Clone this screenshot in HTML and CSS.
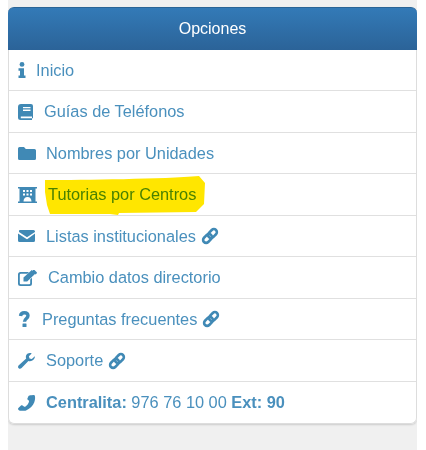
FILE: index.html
```html
<!DOCTYPE html>
<html>
<head>
  <meta charset="UTF-8" />
  <title>Opciones</title>
  <link rel="stylesheet" href="styles.css">
</head>
<body>
  <div class="column">
    <div class="panel">
      <div class="panel-heading">Opciones</div>
      <ul class="menu">
        <li class="menu-item">
          <svg class="icon" width="8" height="16" viewBox="0 0 8 16"><circle cx="4" cy="2.4" r="2.4"/><path d="M.5 6.2H6v7.2h1.5V16H.5v-2.6H2V8.8H.5z"/></svg>
          <a href="#">Inicio</a>
        </li>
        <li class="menu-item">
          <svg class="icon" width="16" height="16" viewBox="0 0 16 16"><path d="M3 0h10a2 2 0 0 1 2 2v12l-1 .6V16H2.500A2.500 2.500 0 0 1 0 13.500V3a3 3 0 0 1 3-3z"/><path class="cut" d="M5 3h7.500v1.300H5zM5 5.600h7.500v1.300H5zM2.800 12.600H14V14.200H2.800z"/></svg>
          <a href="#">Guías de Teléfonos</a>
        </li>
        <li class="menu-item">
          <svg class="icon" width="18" height="13" viewBox="0 0 18 13"><path d="M1.500 0h4.500l1.800 2h8.700A1.500 1.500 0 0 1 18 3.500v8a1.500 1.500 0 0 1-1.500 1.500h-15A1.500 1.500 0 0 1 0 11.500v-10A1.500 1.500 0 0 1 1.500 0z"/></svg>
          <a href="#">Nombres por Unidades</a>
        </li>
        <li class="menu-item">
          <svg class="icon" width="20" height="16" viewBox="0 0 20 16"><path d="M0 0h19v1.500h-1.500v13H19V16H0v-1.500h1.500v-13H0z"/><path class="cut" d="M5 3h2v2H5zM8.500 3h2v2h-2zM12 3h2v2h-2zM5 6.500h2v2H5zM8.500 6.500h2v2h-2zM12 6.500h2v2h-2zM5.500 14.500c0-2.500 1.500-4.500 4-4.500s4 2 4 4.500z"/></svg>
          <span class="marked">
            <a href="#">Tutorias por Centros</a>
            <svg class="marker" width="164" height="42" viewBox="0 0 164 42"><path d="M1 5 C40 5 120 4 155 1 L161 8 L160 29 L152 37 L75 38 L74 40 L66 39 L6 39 L3 30 L1 17z"/></svg>
          </span>
        </li>
        <li class="menu-item">
          <svg class="icon" width="18" height="12" viewBox="0 0 18 12"><path d="M1.500 0h14A1.500 1.500 0 0 1 17 1.500v.5L9 7.200 1 2V1.500A1.500 1.500 0 0 1 1.500 0zM0 3.500l8.500 5.500.5.200.5-.2L17 3.500v7A1.500 1.500 0 0 1 15.500 12h-14A1.500 1.500 0 0 1 0 10.500z"/></svg>
          <a href="#">Listas institucionales</a>
          <svg class="link" width="18" height="18" viewBox="0 0 18 18"><g transform="rotate(-45 9 9)"><rect x="0.500" y="6" width="10" height="6" rx="3"/><rect x="7.500" y="6" width="10" height="6" rx="3"/></g></svg>
        </li>
        <li class="menu-item">
          <svg class="icon" width="20" height="16" viewBox="0 0 20 16"><path d="M2.500 2H11L9.300 3.800H2.800a1 1 0 0 0-1 1v8.400a1 1 0 0 0 1 1h8.400a1 1 0 0 0 1-1V9.500L14 7.700v5.800A2.500 2.500 0 0 1 11.500 16h-9A2.500 2.500 0 0 1 0 13.500v-9A2.500 2.500 0 0 1 2.500 2z"/><path d="M5.500 7.500L13.800 0 17.500 3.500 9.200 11.500H5.500zM15 0l1-.5 3 3-.5 1.200-1 .8-3-3z"/></svg>
          <a href="#">Cambio datos directorio</a>
        </li>
        <li class="menu-item">
          <svg class="icon icon-q" width="14" height="16" viewBox="0 0 14 16"><path class="stroke" d="M2.500 5C2.800 3 4 1.800 6.200 1.800 8.500 1.800 10 3 10 4.800 10 7.500 6.500 7.500 6.500 10.800"/><rect x="4.500" y="12.500" width="4" height="3.500" rx=".5"/></svg>
          <a href="#">Preguntas frecuentes</a>
          <svg class="link" width="18" height="18" viewBox="0 0 18 18"><g transform="rotate(-45 9 9)"><rect x="0.500" y="6" width="10" height="6" rx="3"/><rect x="7.500" y="6" width="10" height="6" rx="3"/></g></svg>
        </li>
        <li class="menu-item">
          <svg class="icon" width="18" height="16" viewBox="0 0 18 16"><path d="M16.800 3.200l-3 2.700-2.300-.5-.6-2.200L13.700.4c-2-.8-4.500-.3-5.400 1.700-.6 1.200-.6 2.400-.1 3.500L.8 12.300c-1 1-1 2.300-.1 3 .8.800 2 .7 2.900-.2l6.800-7c1.300.4 2.700.3 3.900-.5 2-1.200 2.800-2.800 2.500-4.400z"/></svg>
          <a href="#">Soporte</a>
          <svg class="link" width="18" height="18" viewBox="0 0 18 18"><g transform="rotate(-45 9 9)"><rect x="0.500" y="6" width="10" height="6" rx="3"/><rect x="7.500" y="6" width="10" height="6" rx="3"/></g></svg>
        </li>
        <li class="menu-item">
          <svg class="icon" width="18" height="16" viewBox="0 0 18 16"><path d="M13 .3l2.800-.3c.5 0 .8.200 1 .6.500 2 .4 4.400-.5 6.600-1.300 3.600-4.300 6.500-7.800 8-.6.300-1.400.5-2 .6H3c-1.300-.1-2.400-.6-2.800-1.400-.3-.5-.2-1.100.2-1.500L3 10.500c.5-.4 1-.4 1.500-.1l1.800 1.300c.3.200.6.200.9 0 2.200-1.300 3.500-3.300 3.900-5.600 0-.3-.1-.5-.4-.7l-.9-.6c-.4-.3-.5-.7-.4-1.200L10.500 1c.3-.5 1.500-.6 2.500-.7z"/></svg>
          <span><b>Centralita:</b> 976 76 10 00 <b>Ext: 90</b></span>
        </li>
      </ul>
    </div>
  </div>
</body>
</html>
```

FILE: styles.css
```css
html, body {
  height: 100%;
}

body {
  margin: 0;
  background-color: #fff;
  color: #4a90bd;
  font-family: "Liberation Sans", Arial, sans-serif;
  font-size: 16px;
}

.column {
  box-sizing: border-box;
  width: 409px;
  height: 450px;
  margin-left: 8px;
  padding-top: 7px;
  background-color: #f0f0f0;
  overflow: hidden;
}

.panel {
  background-color: #fff;
  border-radius: 6px;
  box-shadow: 0 1px 2px rgba(0, 0, 0, 0.15);
}

.panel-heading {
  box-sizing: border-box;
  height: 42.5px;
  line-height: 42px;
  text-align: center;
  color: #fff;
  background: linear-gradient(to bottom, #337ab7, #2b6398);
  border-top: 1px solid #2a6496;
  border-radius: 6px 6px 0 0;
}

/* Menu rows */
.menu {
  list-style: none;
  margin: 0;
  padding: 0;
  border: 1px solid #ddd;
  border-top: none;
  border-radius: 0 0 6px 6px;
  font-size: 16.35px;
}

.menu-item {
  box-sizing: border-box;
  display: flex;
  align-items: center;
  gap: 10px;
  height: 41.5px;
  padding-top: 1px;
  padding-left: 9px;
  border-bottom: 1px solid #e0e0e0;
}

.menu-item:last-child {
  border-bottom: none;
}

.menu-item a {
  color: inherit;
  text-decoration: none;
}

.icon {
  flex: none;
  fill: #4089b5;
}

.icon .cut {
  fill: #fff;
}

.icon .stroke {
  fill: none;
  stroke: #4089b5;
  stroke-width: 3.4;
}

.link {
  flex: none;
  margin-left: -5px;
  fill: none;
  stroke: #4089b5;
  stroke-width: 2.6;
}

/* Hand drawn yellow marker over the text */
.marked {
  position: relative;
}

.marker {
  position: absolute;
  left: -4px;
  top: -10px;
  fill: #ffe600;
  mix-blend-mode: multiply;
}
```
